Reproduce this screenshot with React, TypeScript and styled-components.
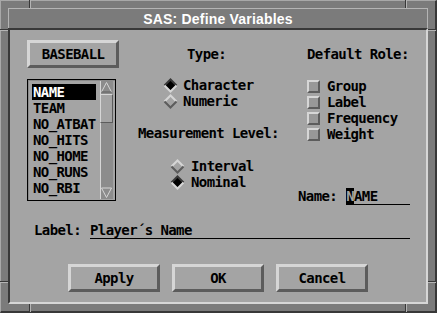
import React from 'react';
import styled, { createGlobalStyle } from 'styled-components';

const c = {
  frame: '#7b7b7b',
  face: '#a4a4a4',
  light: '#d6d6d6',
  dark: '#5c5c5c',
  shadow: '#383838',
  track: '#8c8c8c',
  box: '#989898',
};

const GlobalStyle = createGlobalStyle`
  html, body {
    margin: 0;
    padding: 0;
    background: ${c.face};
  }
  body {
    width: 437px;
    height: 313px;
    overflow: hidden;
  }
`;

const Window = styled.div`
  position: relative;
  box-sizing: border-box;
  width: 437px;
  height: 313px;
  padding: 7px;
  background: ${c.frame};
  border-top: 1px solid #a8a8a8;
  border-left: 1px solid #a8a8a8;
  border-right: 2px solid ${c.shadow};
  border-bottom: 2px solid ${c.shadow};
  display: flex;
  flex-direction: column;
`;

// little cuts in the window frame near each corner
const Notch = styled.span<{ $x: number; $y: number; $vertical?: boolean }>`
  position: absolute;
  left: ${(p) => p.$x}px;
  top: ${(p) => p.$y}px;
  width: ${(p) => (p.$vertical ? '0' : '8px')};
  height: ${(p) => (p.$vertical ? '8px' : '0')};
  ${(p) =>
    p.$vertical
      ? `border-left: 1px solid ${c.shadow}; border-right: 1px solid #b4b4b4;`
      : `border-top: 1px solid ${c.shadow}; border-bottom: 1px solid #b4b4b4;`}
`;

const TitleBar = styled.div`
  box-sizing: border-box;
  height: 20px;
  border-top: 1px solid #b4b4b4;
  border-left: 1px solid #b4b4b4;
  border-right: 1px solid #b4b4b4;
  display: flex;
  align-items: center;
  justify-content: center;
  color: #fff;
  font-family: 'Liberation Sans', Arial, sans-serif;
  font-weight: bold;
  font-size: 14px;
  letter-spacing: 0.2px;
`;

const Client = styled.div`
  flex: 1;
  box-sizing: border-box;
  background: ${c.face};
  border-top: 2px solid ${c.shadow};
  border-left: 2px solid ${c.shadow};
  border-right: 2px solid ${c.light};
  border-bottom: 2px solid ${c.light};
  padding-top: 10px;
  display: flex;
  flex-direction: column;
  font-family: 'DejaVu Sans Mono', 'Liberation Mono', monospace;
  font-weight: bold;
  font-size: 14px;
  letter-spacing: -0.6px;
  line-height: 16px;
  color: #000;
`;

const Upper = styled.div`
  display: flex;
  align-items: flex-start;
  padding-left: 17px;
`;

const LeftCol = styled.div`
  width: 93px;
  display: flex;
  flex-direction: column;
`;

const BevelButton = styled.button`
  box-sizing: border-box;
  width: 92px;
  height: 28px;
  padding: 0;
  background: ${c.face};
  border: 3px solid;
  border-color: ${c.light} ${c.dark} ${c.dark} ${c.light};
  font: inherit;
  letter-spacing: inherit;
  color: #000;
`;

const ListBox = styled.div`
  box-sizing: border-box;
  width: 89px;
  height: 122px;
  margin-top: 11px;
  padding: 1px 2px 1px 4px;
  border: 1px solid #000;
  box-shadow: inset 1px 1px 0 #8a8a8a;
  display: flex;
`;

const Items = styled.ul`
  list-style: none;
  margin: 0;
  padding: 3px 0 0;
  width: 64px;
`;

const Item = styled.li<{ $selected?: boolean }>`
  height: 16px;
  padding-left: 1px;
  white-space: pre;
  background: ${(p) => (p.$selected ? '#000' : 'transparent')};
  color: ${(p) => (p.$selected ? '#fff' : '#000')};
`;

const ScrollBar = styled.div`
  margin-left: auto;
  width: 13px;
  background: ${c.track};
  box-shadow: inset 1px 0 0 ${c.light};
  display: flex;
  flex-direction: column;
`;

const Thumb = styled.div`
  box-sizing: border-box;
  height: 29px;
  margin-top: 1px;
  background: ${c.face};
  border: 1px solid;
  border-color: ${c.light} ${c.dark} ${c.dark} ${c.light};
`;

const Arrow = styled.svg<{ $bottom?: boolean }>`
  display: block;
  margin-top: ${(p) => (p.$bottom ? 'auto' : '0')};
`;

const MidCol = styled.div`
  width: 152px;
  margin: 6px 0 0 18px;
  display: flex;
  flex-direction: column;
`;

const Heading = styled.div<{ $indent: number; $gap?: number }>`
  padding-left: ${(p) => p.$indent}px;
  margin-top: ${(p) => p.$gap ?? 0}px;
  white-space: pre;
`;

const OptionList = styled.div<{ $indent: number; $gap: number }>`
  padding-left: ${(p) => p.$indent}px;
  margin-top: ${(p) => p.$gap}px;
  display: flex;
  flex-direction: column;
`;

const Option = styled.div<{ $space: number }>`
  height: 16px;
  display: flex;
  align-items: center;
  gap: ${(p) => p.$space}px;
`;

const CheckBox = styled.span`
  box-sizing: border-box;
  width: 13px;
  height: 13px;
  background: ${c.box};
  border: 2px solid;
  border-color: ${c.light} ${c.dark} ${c.dark} ${c.light};
`;

const RightCol = styled.div`
  height: 159px;
  margin: 6px 0 0 8px;
  display: flex;
  flex-direction: column;
`;

const FieldRow = styled.div<{ $gap?: number; $indent?: number }>`
  display: flex;
  align-items: flex-start;
  gap: 9px;
  margin-top: ${(p) => (p.$gap === undefined ? 'auto' : `${p.$gap}px`)};
  padding-left: ${(p) => p.$indent ?? 0}px;
`;

const Field = styled.div<{ $width: number }>`
  width: ${(p) => p.$width}px;
  height: 16px;
  border-bottom: 1px solid #000;
  white-space: pre;
`;

const Cursor = styled.span`
  background: #000;
  color: ${c.face};
`;

const ButtonRow = styled.div`
  margin-top: 25px;
  display: flex;
  justify-content: center;
  gap: 12px;
`;

const Diamond = ({ on }: { on: boolean }) => (
  <svg width="15" height="15" viewBox="0 0 15 15">
    <polygon points="7.5,1.5 13.5,7.5 7.5,13.5 1.5,7.5" fill={on ? '#000' : c.face} />
    <polyline
      points="1.5,7.5 7.5,1.5 13.5,7.5"
      fill="none"
      stroke={on ? c.shadow : c.light}
      strokeWidth="2"
    />
    <polyline
      points="1.5,7.5 7.5,13.5 13.5,7.5"
      fill="none"
      stroke={on ? c.light : c.dark}
      strokeWidth="2"
    />
  </svg>
);

const variables = ['NAME', 'TEAM', 'NO_ATBAT', 'NO_HITS', 'NO_HOME', 'NO_RUNS', 'NO_RBI'];
const roles = ['Group', 'Label', 'Frequency', 'Weight'];

export default function App() {
  return (
    <>
      <GlobalStyle />
      <Window>
        <Notch $vertical $x={28} $y={-1} />
        <Notch $vertical $x={404} $y={-1} />
        <Notch $vertical $x={28} $y={303} />
        <Notch $vertical $x={404} $y={303} />
        <Notch $x={-1} $y={28} />
        <Notch $x={-1} $y={280} />
        <Notch $x={427} $y={28} />
        <Notch $x={427} $y={280} />

        <TitleBar>SAS: Define Variables</TitleBar>
        <Client>
          <Upper>
            <LeftCol>
              <BevelButton>BASEBALL</BevelButton>
              <ListBox>
                <Items>
                  {variables.map((v, i) => (
                    <Item key={v} $selected={i === 0}>
                      {v}
                    </Item>
                  ))}
                </Items>
                <ScrollBar>
                  <Arrow width="13" height="12" viewBox="0 0 13 12">
                    <polyline points="1.5,11 6.5,1.5 11.5,11" fill="none" stroke={c.light} strokeWidth="1" />
                    <line x1="1.5" y1="11" x2="11.5" y2="11" stroke={c.dark} strokeWidth="1" />
                  </Arrow>
                  <Thumb />
                  <Arrow $bottom width="13" height="12" viewBox="0 0 13 12">
                    <polyline points="1.5,1 6.5,10.5 11.5,1" fill="none" stroke={c.light} strokeWidth="1" />
                    <line x1="1.5" y1="1" x2="11.5" y2="1" stroke={c.light} strokeWidth="1" />
                  </Arrow>
                </ScrollBar>
              </ListBox>
            </LeftCol>

            <MidCol>
              <Heading $indent={49}>Type:</Heading>
              <OptionList $indent={25} $gap={15}>
                <Option $space={5}>
                  <Diamond on />
                  Character
                </Option>
                <Option $space={5}>
                  <Diamond on={false} />
                  Numeric
                </Option>
              </OptionList>
              <Heading $indent={0} $gap={16}>
                Measurement Level:
              </Heading>
              <OptionList $indent={32} $gap={17}>
                <Option $space={6}>
                  <Diamond on={false} />
                  Interval
                </Option>
                <Option $space={6}>
                  <Diamond on />
                  Nominal
                </Option>
              </OptionList>
            </MidCol>

            <RightCol>
              <Heading $indent={9}>Default Role:</Heading>
              <OptionList $indent={9} $gap={16}>
                {roles.map((r) => (
                  <Option key={r} $space={7}>
                    <CheckBox />
                    {r}
                  </Option>
                ))}
              </OptionList>
              <FieldRow>
                <span>Name:</span>
                <Field $width={64}>
                  <Cursor>N</Cursor>AME
                </Field>
              </FieldRow>
            </RightCol>
          </Upper>

          <FieldRow $gap={17} $indent={24}>
            <span>Label:</span>
            <Field $width={320}>Player´s Name</Field>
          </FieldRow>

          <ButtonRow>
            <BevelButton>Apply</BevelButton>
            <BevelButton>OK</BevelButton>
            <BevelButton>Cancel</BevelButton>
          </ButtonRow>
        </Client>
      </Window>
    </>
  );
}
